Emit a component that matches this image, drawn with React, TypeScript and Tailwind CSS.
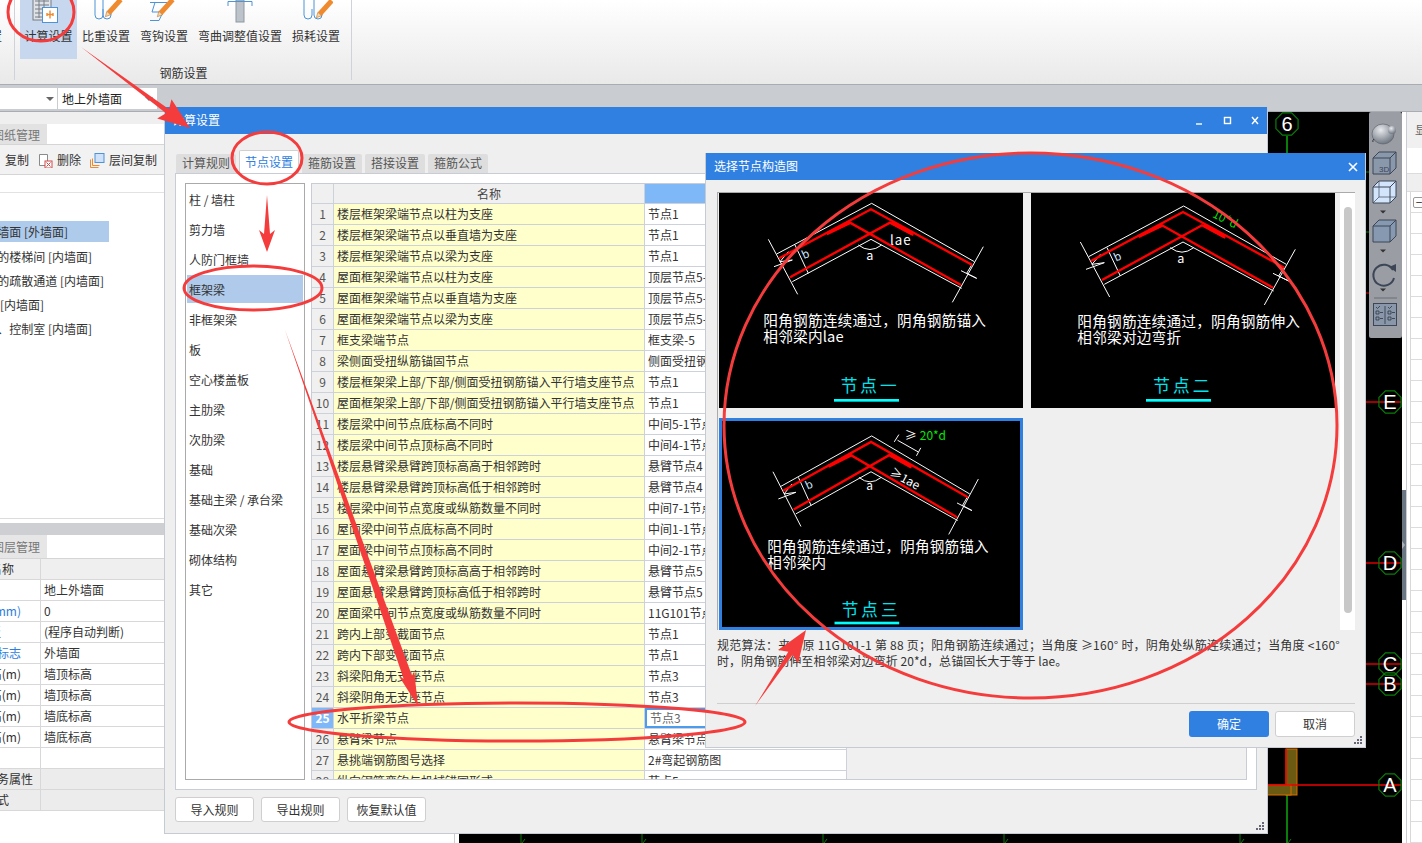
import React from "react";

const rows: [string, string][] = [
  ["楼层框架梁端节点以柱为支座", "节点1"],
  ["楼层框架梁端节点以垂直墙为支座", "节点1"],
  ["楼层框架梁端节点以梁为支座", "节点1"],
  ["屋面框架梁端节点以柱为支座", "顶层节点5-1"],
  ["屋面框架梁端节点以垂直墙为支座", "顶层节点5-1"],
  ["屋面框架梁端节点以梁为支座", "顶层节点5-1"],
  ["框支梁端节点", "框支梁-5"],
  ["梁侧面受扭纵筋锚固节点", "侧面受扭钢筋锚固"],
  ["楼层框架梁上部/下部/侧面受扭钢筋锚入平行墙支座节点", "节点1"],
  ["屋面框架梁上部/下部/侧面受扭钢筋锚入平行墙支座节点", "节点1"],
  ["楼层梁中间节点底标高不同时", "中间5-1节点"],
  ["楼层梁中间节点顶标高不同时", "中间4-1节点"],
  ["楼层悬臂梁悬臂跨顶标高高于相邻跨时", "悬臂节点4"],
  ["楼层悬臂梁悬臂跨顶标高低于相邻跨时", "悬臂节点4"],
  ["楼层梁中间节点宽度或纵筋数量不同时", "中间7-1节点"],
  ["屋面梁中间节点底标高不同时", "中间1-1节点"],
  ["屋面梁中间节点顶标高不同时", "中间2-1节点"],
  ["屋面悬臂梁悬臂跨顶标高高于相邻跨时", "悬臂节点5"],
  ["屋面悬臂梁悬臂跨顶标高低于相邻跨时", "悬臂节点5"],
  ["屋面梁中间节点宽度或纵筋数量不同时", "11G101节点"],
  ["跨内上部变截面节点", "节点1"],
  ["跨内下部变截面节点", "节点1"],
  ["斜梁阳角无支座节点", "节点3"],
  ["斜梁阴角无支座节点", "节点3"],
  ["水平折梁节点", "节点3"],
  ["悬臂梁节点", "悬臂梁节点"],
  ["悬挑端钢筋图号选择", "2#弯起钢筋图"],
  ["纵向钢筋弯钩与机械锚固形式", "节点5"],
];

const categories = ["柱 / 墙柱", "剪力墙", "人防门框墙", "框架梁", "非框架梁", "板", "空心楼盖板", "主肋梁", "次肋梁", "基础", "基础主梁 / 承台梁", "基础次梁", "砌体结构", "其它"];

const props: [string, string, boolean?, boolean?, number?][] = [
  ["", "地上外墙面"],
  ["厚度(mm)", "0", true],
  ["板", "(程序自动判断)", false, false, 1],
  ["外墙标志", "外墙面", true],
  ["顶标高(m)", "墙顶标高"],
  ["顶标高(m)", "墙顶标高"],
  ["底标高(m)", "墙底标高"],
  ["底标高(m)", "墙底标高"],
  ["", ""],
  ["业务属性", "", false, true, 33],
  ["公式", "", false, true, 9],
];

const walls: [number, string][] = [
  [92, "的楼梯间 [内墙面]"],
  [104, "的疏散通道 [内墙面]"],
  [44, "[内墙面]"],
  [92, "、控制室 [内墙面]"],
];

function Hook({ x }: { x: number }) {
  return <path d={`M${x} -2V15a4 4 0 0 0 8 0V9`} fill="none" stroke="#4c93d8" strokeWidth="1" />;
}

function Pencil({ x, y }: { x: number; y: number }) {
  return (
    <g transform={`translate(${x} ${y}) rotate(42)`}>
      <rect x="-2.5" y="-22" width="5" height="18" fill="#ef8a2e" />
      <path d="M-2.5 -4L0 1L2.5 -4Z" fill="#f6d7a8" stroke="#b56a20" strokeWidth="0.5" />
    </g>
  );
}

function RibbonIcon({ kind }: { kind: number }) {
  return (
    <svg viewBox="0 0 34 23" className="w-[34px] h-[23px] overflow-hidden">
      {kind === 0 && (
        <g>
          <rect x="1" y="-5" width="18" height="25" fill="#dfe2e6" stroke="#767d86" />
          <path d="M3 1h14M3 5h14M3 9h8M3 13h8M3 17h8M7 -2v20M12 -2v12" stroke="#767d86" />
          <rect x="10.5" y="7.5" width="15" height="15" fill="#fff" stroke="#4c93d8" />
          <path d="M18 10.5v8M15 14.5h6M15 13v3M21 13v3" fill="none" stroke="#ef8a2e" strokeWidth="1.4" />
        </g>
      )}
      {kind === 1 && (
        <g>
          <Hook x={6} />
          <Hook x={14} />
          <Pencil x={17} y={16} />
        </g>
      )}
      {kind === 2 && (
        <g>
          <path d="M3 2.5H20M8 2.5L5 12H16L12 20.5H3" fill="none" stroke="#4c93d8" />
          <Pencil x={11} y={16} />
        </g>
      )}
      {kind === 3 && (
        <g>
          <rect x="13" y="0" width="8" height="22" fill="#bcc3cb" stroke="#8f979f" />
          <path d="M5 6V1.5H29V6" fill="none" stroke="#4c93d8" />
        </g>
      )}
      {kind === 4 && (
        <g>
          <Hook x={5} />
          <Hook x={15} />
          <Pencil x={18} y={17} />
        </g>
      )}
    </svg>
  );
}

function ClippedLabel({ text, end }: { text: string; end: number }) {
  return (
    <div className="whitespace-nowrap flex justify-end overflow-hidden shrink-0" style={{ width: end }}>
      <span>{text}</span>
    </div>
  );
}

function Ribbon() {
  const items: [string, number][] = [
    ["比重设置", 58],
    ["弯钩设置", 58],
    ["弯曲调整值设置", 94],
    ["损耗设置", 58],
  ];
  return (
    <div className="h-[85px] flex bg-gradient-to-b from-white to-[#e9e9e9] border-b border-[#a9adb3] text-[#333] text-xs">
      <div className="w-[14px] shrink-0 relative">
        <div className="pt-[28px]">
          <ClippedLabel text="置" end={2} />
        </div>
      </div>
      <div className="w-px h-[80px] bg-[#cfd2d6] mr-[5px]" />
      <div className="w-[331px] flex flex-col">
        <div className="flex h-[59px]">
          <div className="w-[57px] bg-[#c6d7ee] flex flex-col items-center">
            <RibbonIcon kind={0} />
            <span className="mt-[5px] leading-[16px]">计算设置</span>
          </div>
          {items.map(([label, w], i) => (
            <div key={label} className="flex flex-col items-center" style={{ width: w }}>
              <RibbonIcon kind={i + 1} />
              <span className="mt-[5px] leading-[16px] whitespace-nowrap">{label}</span>
            </div>
          ))}
        </div>
        <div className="flex-1 flex items-center justify-center pt-[3px] -ml-[4px]">钢筋设置</div>
      </div>
      <div className="w-px h-[80px] bg-[#cfd2d6]" />
    </div>
  );
}

function Caret() {
  return <div className="w-0 h-0 border-x-[4px] border-x-transparent border-t-[4px] border-t-[#666]" />;
}

function OptionBar() {
  return (
    <div className="h-[27px] bg-[#c9ccd0] border-b border-[#a9adb3] flex items-start pt-[3px] gap-px text-xs text-[#222]">
      <div className="w-[57px] h-[21px] bg-white flex items-center justify-end pr-[3px]">
        <Caret />
      </div>
      <div className="w-[99px] h-[21px] bg-white flex items-center justify-between px-[4px]">
        <span>地上外墙面</span>
        <Caret />
      </div>
    </div>
  );
}

function LeftPanel() {
  return (
    <div className="w-[455px] shrink-0 border-r border-[#c9ccd0] bg-white flex flex-col text-xs text-[#333]">
      <div className="h-[12px] bg-[#efefef]" />
      <div className="h-[20px] w-[47px] bg-[#e2e2e2] text-[#777] flex justify-end items-center pr-[7px] pt-px overflow-hidden whitespace-nowrap">图纸管理</div>
      <div className="h-[31px] bg-[#f2f2f2] border-t border-[#d5d5d5] border-b flex items-center pt-px">
        <span className="ml-[5px]">复制</span>
        <svg viewBox="0 0 15 15" className="w-[15px] h-[15px] ml-[9px]">
          <path d="M1.5 1.5h8v11h-8z" fill="#fff" stroke="#8a8a8a" />
          <rect x="7" y="8" width="7" height="7" fill="#fff" stroke="#d04a4a" />
          <path d="M8.5 9.5l4 4M12.5 9.5l-4 4" stroke="#d04a4a" />
        </svg>
        <span className="ml-[4px]">删除</span>
        <svg viewBox="0 0 15 15" className="w-[15px] h-[15px] ml-[9px]">
          <path d="M0.5 6.5v8h8" fill="none" stroke="#ef8a2e" />
          <path d="M2.5 5.5v7h7" fill="none" stroke="#ef8a2e" />
          <rect x="5" y="0.5" width="9" height="9" fill="#cfe2fa" stroke="#4c93d8" />
        </svg>
        <span className="ml-[4px]">层间复制</span>
      </div>
      <div className="h-[18px] border-b border-[#e2e2e2]" />
      <div className="h-[28px]" />
      <div className="flex flex-col">
        <div className="h-[21px] w-[109px] bg-[#aecbec] flex items-center mb-[3px]">
          <ClippedLabel text="外墙面 [外墙面]" end={68} />
        </div>
        {walls.map(([end, text]) => (
          <div key={text} className="h-[24px] flex items-center">
            <ClippedLabel text={text} end={end} />
          </div>
        ))}
      </div>
      <div className="h-[178px] border-b border-[#dcdcdc]" />
      <div className="h-[12px] bg-[#cdcfd2] mt-[4px]" />
      <div className="h-[23px] w-[47px] bg-[#e6e6e6] text-[#777] flex items-center justify-end pr-[7px] overflow-hidden whitespace-nowrap">图层管理</div>
      <div className="border-t border-[#d5d5d5]">
        <div className="flex h-[21px] bg-[#efefef] border-b border-[#d8d8d8]">
          <div className="w-[41px] border-r border-[#d8d8d8] flex items-center">
            <ClippedLabel text="名称" end={14} />
          </div>
        </div>
        {props.map(([name, val, blue, gray, end], i) => (
          <div key={i} className={`flex h-[21px] border-b border-[#d8d8d8] ${gray ? "bg-[#ececec]" : ""}`}>
            <div className={`w-[41px] shrink-0 border-r border-[#d8d8d8] flex items-center ${blue ? "text-[#2b7de0]" : ""}`}>
              <ClippedLabel text={name} end={end ?? 21} />
            </div>
            <div className="pl-[3px] flex items-center">{val}</div>
          </div>
        ))}
      </div>
    </div>
  );
}

function octagon(cx: number, cy: number, r: number) {
  return Array.from({ length: 8 }, (_, i) => {
    const t = (Math.PI / 8) * (2 * i + 1);
    return `${cx + r * Math.cos(t)},${cy + r * Math.sin(t)}`;
  }).join(" ");
}

function Axis({ x, y, label }: { x: number; y: number; label: string }) {
  return (
    <g>
      <polygon points={octagon(x, y, 12)} fill="none" stroke="#0a7d0a" strokeWidth="1.2" />
      <text x={x} y={y + 7} textAnchor="middle" fontSize="20" fill="#fff" fontFamily="'Liberation Sans', sans-serif">
        {label}
      </text>
    </g>
  );
}

function Canvas() {
  const ticks = [521, 642, 823, 1004, 1240, 1287];
  return (
    <div className="flex-1 relative bg-black ml-[4px]">
      <svg viewBox="459 112 943 731" className="w-[943px] h-[731px] block">
        <path d="M1287 136V160" stroke="#0a7d0a" strokeWidth="2" />
        <path d="M1287 795V843" stroke="#0a7d0a" strokeWidth="2" />
        {ticks.map((t) => (
          <path key={t} d={`M${t} 834v9M${t + 1} 843l3 -4`} stroke="#0a7d0a" fill="none" />
        ))}
        <path d="M1360 172h10M1360 232h10" stroke="#0a7d0a" />
        <path d="M1360 293h10" stroke="#e00000" />
        <path d="M1360 402H1401M1360 563H1401M1360 664H1401M1360 684H1401" stroke="#d80000" strokeWidth="1.6" />
        <rect x="1286" y="749" width="11" height="46" fill="#6b5a12" stroke="#d96f00" />
        <rect x="1262" y="785" width="29" height="10" fill="#6b5a12" stroke="#d96f00" />
        <path d="M1262 785H1401M1286 749V785" stroke="#ee0000" strokeWidth="1.6" />
        <Axis x={1287} y={124} label="6" />
        <Axis x={1390} y={402} label="E" />
        <Axis x={1390} y={563} label="D" />
        <Axis x={1390} y={664} label="C" />
        <Axis x={1390} y={684} label="B" />
        <Axis x={1390} y={785} label="A" />
      </svg>
      <ViewToolbar />
    </div>
  );
}

function Cube({ y, fill, wire, label }: { y: number; fill: string; wire?: boolean; label?: string }) {
  const edge = "#3c4656";
  return (
    <g stroke={edge} strokeWidth="1">
      <path d={`M4 ${y + 6}L10 ${y}H27V${y + 16}L21 ${y + 22}H4Z`} fill={fill} />
      <path d={`M4 ${y + 6}H21V${y + 22}M21 ${y + 6}L27 ${y}`} fill="none" />
      {wire && <path d={`M10 ${y}V${y + 16}H27M10 ${y + 16}L4 ${y + 22}`} fill="none" strokeWidth="0.7" />}
      {label && (
        <text x="10" y={y + 20} fontSize="8" fill={edge} stroke="none" fontFamily="'Liberation Sans', sans-serif">
          {label}
        </text>
      )}
    </g>
  );
}

function ViewToolbar() {
  return (
    <div className="absolute right-0 top-0 w-[33px] h-[226px] bg-[#9a9da3] rounded-[2px]">
      <svg viewBox="0 0 33 226" className="w-[33px] h-[226px] block">
        <defs>
          <radialGradient id="ball" cx="0.4" cy="0.3" r="0.8">
            <stop offset="0" stopColor="#e8eaee" />
            <stop offset="1" stopColor="#5f6772" />
          </radialGradient>
        </defs>
        <ellipse cx="14" cy="22" rx="11" ry="10" fill="url(#ball)" stroke="#565c66" strokeWidth="0.6" />
        <circle cx="23" cy="18" r="4" fill="url(#ball)" />
        <path d="M5 27q-2 2 -1 3" stroke="#333" fill="none" />
        <Cube y={40} fill="#8a98ac" label="3D" />
        <Cube y={69} fill="#d3e5fb" wire />
        <path d="M11 98.5h6l-3 3z" fill="#333" />
        <Cube y={108} fill="#8799b0" />
        <path d="M11 137.5h6l-3 3z" fill="#333" />
        <path d="M24 158a10.5 10.5 0 1 0 1 8" fill="none" stroke="#3c4656" strokeWidth="2" />
        <path d="M20 155l7 -3v8z" fill="#3c4656" />
        <path d="M11 176.5h6l-3 3z" fill="#333" />
        <path d="M5 186h23" stroke="#6a6e75" />
        <rect x="4.5" y="191.5" width="23" height="22" fill="#8a96aa" stroke="#3c4656" />
        <path d="M16 194v18M7 199h3v3h-3zM7 205h3v3h-3zM19 199h3v3h-3zM19 205h3v3h-3zM11 200.5h3M11 206.5h3M23 200.5h3M23 206.5h3M7 195l1.5 1.5L11 194M19 195l1.5 1.5L23 194" fill="none" stroke="#2f3743" strokeWidth="0.8" />
      </svg>
    </div>
  );
}

function RightPanel() {
  return (
    <div className="w-[20px] shrink-0 flex bg-white">
      <div className="w-[4px] flex flex-col">
        <div className="h-[378px]" />
        <div className="h-[110px] bg-[#6b7683] flex items-center">
          <div className="w-0 h-0 border-y-[4px] border-y-transparent border-l-[3px] border-l-[#aab0b8]" />
        </div>
      </div>
      <div className="flex-1 border-l border-[#c9ccd0] flex flex-col text-xs overflow-hidden">
        <div className="h-[38px] bg-[#f0f0f0] flex items-center pl-[8px] text-[#666] whitespace-nowrap">显示</div>
        <div className="h-[26px] ml-[2px] bg-white" />
        <div className="h-[20px] bg-[#efefef] border-y border-[#dcdcdc]" />
        <div className="ml-[3px] border-l border-[#d8d8d8]">
          {Array.from({ length: 31 }, (_, i) => (
            <div key={i} className="h-[21px] border-b border-[#dcdcdc] flex items-center pl-[2px]">
              {i === 0 && <div className="w-[12px] h-[11px] border border-[#999] rounded-[2px] shrink-0 flex items-center justify-center text-[#333] leading-none bg-white">−</div>}
            </div>
          ))}
        </div>
      </div>
    </div>
  );
}

function Grip() {
  return (
    <svg viewBox="0 0 9 9" className="absolute right-[2px] bottom-[2px] w-[9px] h-[9px]">
      <path d="M6 0h2v2H6zM3 3h2v2H3zM6 3h2v2H6zM0 6h2v2H0zM3 6h2v2H3zM6 6h2v2H6z" fill="#667" />
    </svg>
  );
}

function WinButton({ children, primary }: { children: React.ReactNode; primary?: boolean }) {
  return (
    <div className={`w-[80px] h-[26px] rounded-[3px] flex items-center justify-center text-xs ${primary ? "bg-[#2f80e0] text-white" : "bg-white border border-[#cfcfcf] text-[#333]"}`}>
      {children}
    </div>
  );
}

function RuleDialog() {
  const tabs = ["计算规则", "节点设置", "箍筋设置", "搭接设置", "箍筋公式"];
  return (
    <div className="absolute left-[164px] top-[107px] w-[1104px] h-[727px] bg-[#efefef] border-x border-b border-[#c5cad3] text-xs text-[#333]">
      <div className="h-[27px] bg-[#2f80e0] text-white flex items-center pl-[7px] pb-[2px]">
        <span className="flex-1">计算设置</span>
        <svg viewBox="0 0 70 12" className="w-[70px] h-[12px] mr-[3px] mt-[2px]">
          <path d="M2 9h6" stroke="#fff" strokeWidth="1.4" />
          <rect x="30.5" y="2.5" width="6" height="6" fill="none" stroke="#fff" strokeWidth="1.4" />
          <path d="M58 2l6 7M64 2l-6 7" stroke="#fff" strokeWidth="1.4" />
        </svg>
      </div>
      <div className="h-[39px] flex items-end pl-[11px] gap-[3px]">
        {tabs.map((t, i) => (
          <div key={t} className={`w-[60px] flex items-center justify-center rounded-t-[2px] pb-px ${i === 1 ? "h-[23px] bg-white text-[#2f80e0] border border-b-0 border-[#d0d0d0]" : "h-[19px] bg-[#dedede] text-[#555]"}`}>
            {t}
          </div>
        ))}
      </div>
      <div className="w-[1082px] h-[617px] ml-[10px] bg-white border border-[#c8ccd4] p-[9px] flex gap-[6px]">
        <div className="w-[120px] h-[597px] border border-[#aaa] pt-px pl-px pr-px">
          {categories.map((c) => (
            <div key={c} className={`h-[28px] mb-[2px] flex items-center pl-[2px] pt-px ${c === "框架梁" ? "bg-[#afcaeb]" : ""}`}>
              {c}
            </div>
          ))}
        </div>
        <div className="w-[936px] h-[597px] border border-[#c8ccd4] bg-[#f0f0f0] overflow-hidden">
          <div className="flex w-[535px] h-[20px] border-b border-[#cdd2da]">
            <div className="w-[22px] border-r border-[#cdd2da]" />
            <div className="w-[311px] border-r border-[#cdd2da] flex items-center justify-center text-[#444]">名称</div>
            <div className="w-[202px] bg-[#7fb8f8] border-r border-[#cdd2da]" />
          </div>
          {rows.map(([name, val], i) => (
            <div key={i} className="flex w-[535px] h-[21px] border-b border-[#cdd2da]">
              <div className={`w-[22px] border-r border-[#cdd2da] flex items-center justify-center ${i === 24 ? "bg-[#7fb8f8] text-white font-bold" : "text-[#555]"}`}>
                {i + 1}
              </div>
              <div className="w-[311px] bg-[#ffffcc] border-r border-[#cdd2da] flex items-center pl-[3px] whitespace-nowrap">{name}</div>
              <div className={`w-[202px] bg-white flex items-center whitespace-nowrap ${i === 24 ? "border-2 border-[#4d9bec] pl-[3px] text-[#666]" : "border-r border-[#cdd2da] pl-[3px]"}`}>
                {val}
              </div>
            </div>
          ))}
        </div>
      </div>
      <div className="flex gap-[7px] pl-[10px] mt-[7px]">
        {["导入规则", "导出规则", "恢复默认值"].map((b) => (
          <div key={b} className="w-[79px] h-[25px] bg-white border border-[#cfcfcf] rounded-[3px] flex items-center justify-center">
            {b}
          </div>
        ))}
      </div>
      <Grip />
    </div>
  );
}

function Beam({ transform }: { transform?: string }) {
  return (
    <g transform={transform} fill="none">
      <g stroke="#fff" strokeWidth="3">
        <path d="M215 312L500 160L808 335" />
        <path d="M262 395L498 268L770 415" />
        <path d="M190 268L278 433M835 290L742 457" />
        <path d="M207 350L262 330L225 335L250 305M768 362L815 385L785 370L800 345" />
        <path d="M270 285L310 370" />
        <path d="M460 285Q495 312 530 285" />
      </g>
      <g stroke="#ff0000" strokeWidth="7">
        <path d="M222 325L498 178L802 345" />
        <path d="M255 382L555 218L625 255" />
        <path d="M365 250L435 218L768 405" />
      </g>
      <path d="M365 252L435 218M560 218L622 252" stroke="#ff0000" strokeWidth="9" />
    </g>
  );
}

function CadText({ x, y, lines }: { x: number; y: number; lines: string[] }) {
  return (
    <g fill="#fff" fontSize="44" letterSpacing="0.6">
      {lines.map((l, i) => (
        <text key={l} x={x} y={y + i * 48}>
          {l}
        </text>
      ))}
    </g>
  );
}

function NodeTitle({ x, y, barX, barY, text }: { x: number; y: number; barX: number; barY: number; text: string }) {
  return (
    <g>
      <text x={x} y={y} fontSize="50" letterSpacing="9" fill="#00e4ee">
        {text}
      </text>
      <rect x={barX} y={barY} width="195" height="8" fill="#00ffff" />
    </g>
  );
}

function NodeCards() {
  const font = "'Noto Sans CJK SC', sans-serif";
  return (
    <div className="grid grid-cols-[304px_304px] gap-x-[8px] gap-y-[9px]">
      <div className="h-[215px] bg-black">
        <svg viewBox="42 129 912 645" className="w-full h-full block" fontFamily={font}>
          <Beam />
          <text x="555" y="284" fontSize="40" fill="#fff" letterSpacing="3">lae</text>
          <text x="484" y="330" fontSize="38" fill="#fff">a</text>
          <text x="292" y="325" fontSize="34" fill="#cfe6ff" transform="rotate(-25 300 315)">b</text>
          <CadText x={175} y={527} lines={["阳角钢筋连续通过，阴角钢筋锚入", "相邻梁内lae"]} />
          <NodeTitle x={407} y={725} barX={387} barY={747} text="节点一" />
        </svg>
      </div>
      <div className="h-[215px] bg-black">
        <svg viewBox="18 129 912 645" className="w-full h-full block" fontFamily={font}>
          <Beam transform="translate(-24 8)" />
          <text x="457" y="338" fontSize="38" fill="#fff">a</text>
          <text x="268" y="333" fontSize="34" fill="#cfe6ff" transform="rotate(-25 276 323)">b</text>
          <text x="560" y="200" fontSize="36" fill="#00dd00" transform="rotate(27 560 200)">10*d</text>
          <CadText x={157} y={532} lines={["阳角钢筋连续通过，阴角钢筋伸入", "相邻梁对边弯折"]} />
          <NodeTitle x={385} y={725} barX={363} barY={747} text="节点二" />
        </svg>
      </div>
      <div className="h-[212px] bg-black border-[3px] border-[#2f80e0]">
        <svg viewBox="51 27 894 621" className="w-full h-full block" fontFamily={font}>
          <Beam transform="translate(20 -88) scale(0.96 1)" />
          <path d="M568 90L582 68M635 132L648 108M578 85L640 120" stroke="#fff" strokeWidth="3" fill="none" />
          <text x="600" y="85" fontSize="36" fill="#fff">≥</text>
          <text x="645" y="84" fontSize="36" fill="#00ee00">20*d</text>
          <text x="552" y="190" fontSize="36" fill="#fff" transform="rotate(28 552 190)">≥1ae</text>
          <text x="484" y="236" fontSize="36" fill="#fff">a</text>
          <text x="302" y="232" fontSize="34" fill="#cfe6ff" transform="rotate(-25 310 222)">b</text>
          <CadText x={185} y={422} lines={["阳角钢筋连续通过，阴角钢筋锚入", "相邻梁内"]} />
          <NodeTitle x={410} y={615} barX={388} barY={632} text="节点三" />
        </svg>
      </div>
    </div>
  );
}

function NodeDialog() {
  return (
    <div className="absolute left-[705px] top-[153px] w-[661px] h-[595px] bg-[#efefef] border-x border-b border-[#c5cad3] text-xs text-[#333]">
      <div className="h-[27px] bg-[#2f80e0] text-white flex items-center pl-[8px] pr-[7px] pb-[2px] justify-between">
        <span>选择节点构造图</span>
        <svg viewBox="0 0 10 10" className="w-[10px] h-[10px] mt-[2px]">
          <path d="M1 1l8 8M9 1l-8 8" stroke="#fff" strokeWidth="1.6" />
        </svg>
      </div>
      <div className="ml-[11px] mt-[12px] w-[638px] h-[438px] border-t border-l border-[#aaa] flex pl-px">
        <NodeCards />
        <div className="w-[5px]" />
        <div className="w-[15px] bg-white flex justify-center pt-[14px]">
          <div className="w-[8px] h-[406px] bg-[#c8c8c8] rounded-[4px]" />
        </div>
      </div>
      <div className="ml-[11px] mt-[7px] w-[640px] leading-[16px] whitespace-nowrap">
        <div className="tracking-[0.23px]">规范算法：来自原 11G101-1 第 88 页；阳角钢筋连续通过；当角度 ≥160° 时，阴角处纵筋连续通过；当角度 &lt;160°</div>
        <div className="tracking-[0.05px]">时，阴角钢筋伸至相邻梁对边弯折 20*d，总锚固长大于等于 lae。</div>
      </div>
      <div className="ml-[11px] mt-[34px] w-[638px] h-px bg-[#cfcfcf]" />
      <div className="flex justify-end gap-[6px] mt-[7px] w-[649px]">
        <WinButton primary>确定</WinButton>
        <WinButton>取消</WinButton>
      </div>
      <Grip />
    </div>
  );
}

function arrow(x1: number, y1: number, x2: number, y2: number, shaft: number, head: number, len: number) {
  const d = Math.hypot(x2 - x1, y2 - y1);
  const ux = (x2 - x1) / d;
  const uy = (y2 - y1) / d;
  const px = -uy;
  const py = ux;
  const bx = x2 - ux * len;
  const by = y2 - uy * len;
  const pts = [
    [x1, y1],
    [bx + (px * shaft) / 2, by + (py * shaft) / 2],
    [bx + (px * head) / 2 - ux * 4, by + (py * head) / 2 - uy * 4],
    [x2, y2],
    [bx - (px * head) / 2 - ux * 4, by - (py * head) / 2 - uy * 4],
    [bx - (px * shaft) / 2, by - (py * shaft) / 2],
  ];
  return pts.map((p) => p.join(",")).join(" ");
}

function Annotations() {
  const red = "#f53c3c";
  return (
    <svg viewBox="0 0 1422 843" className="absolute inset-0 w-[1422px] h-[843px] pointer-events-none">
      <g fill="none" stroke={red} strokeWidth="3">
        <ellipse cx="41" cy="12" rx="33" ry="29" />
        <ellipse cx="267" cy="158" rx="35" ry="26" />
        <ellipse cx="253" cy="288" rx="69" ry="22" />
        <ellipse cx="517" cy="722" rx="228" ry="19" />
        <ellipse cx="1030.5" cy="425.5" rx="306.5" ry="272.5" />
      </g>
      <g fill={red}>
        <polygon points={arrow(81, 47, 190, 128, 5, 24, 28)} />
        <polygon points={arrow(267, 195, 267, 252, 6, 16, 18)} />
        <polygon points={arrow(285, 330, 418, 706, 9, 16, 30)} />
        <polygon points={arrow(755, 706, 806, 630, 5, 24, 28)} />
      </g>
    </svg>
  );
}

export default function App() {
  return (
    <div className="relative w-[1422px] h-[843px] overflow-hidden bg-white font-['Noto_Sans_CJK_SC','Liberation_Sans',sans-serif]">
      <Ribbon />
      <OptionBar />
      <div className="flex h-[731px]">
        <LeftPanel />
        <Canvas />
        <RightPanel />
      </div>
      <RuleDialog />
      <NodeDialog />
      <Annotations />
    </div>
  );
}
